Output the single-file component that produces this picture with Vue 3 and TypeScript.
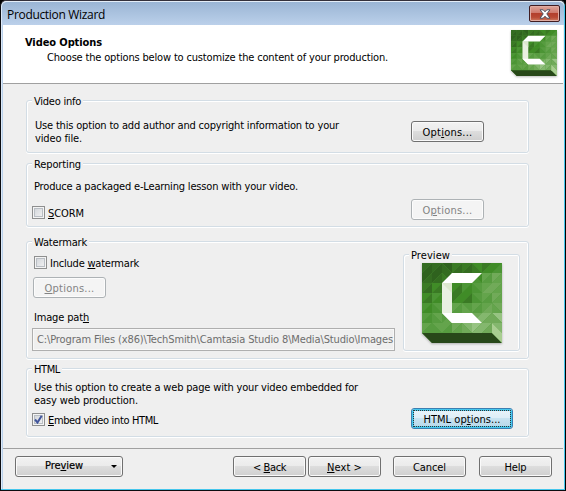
<script setup lang="ts">
import { ref } from 'vue'

const embed = ref(true)
const scorm = ref(false)
const watermark = ref(false)
const imagePath = 'C:\\Program Files (x86)\\TechSmith\\Camtasia Studio 8\\Media\\Studio\\Images'

// Spreads a label over a given width, so dialog metrics stay constant across fonts.
const vFit = {
  mounted(el: HTMLElement, binding: { value: number }) {
    const count = (el.textContent ?? '').length
    const natural = el.getBoundingClientRect().width
    el.style.letterSpacing = `${(binding.value - natural) / count}px`
  },
}

// Facet colours: one pair (upper, lower triangle) for each tile of the logo.
const palette: Record<string, string> = {
  a: '#2f621e', b: '#346c21', c: '#3a7a24', d: '#408c27', e: '#4c9535',
  f: '#579c40', g: '#64a44c', h: '#71aa59', i: '#84b76e', j: '#97c382',
}
const tiles: string[][] = [
  ['ba', 'ba', 'ab', 'cb', 'cb', 'dc', 'cd', 'de'],
  ['ab', 'ab', 'bc', 'cd', 'dc', 'de', 'gf', 'hg'],
  ['cb', 'dc', 'de', 'dc', 'ed', 'fe', 'gh', 'hg'],
  ['dc', 'ed', 'de', 'cd', 'dc', 'fe', 'gf', 'hg'],
  ['ed', 'fe', 'fe', 'gf', 'fg', 'gf', 'gh', 'hg'],
  ['fe', 'gf', 'fg', 'hg', 'gh', 'hi', 'ih', 'jh'],
  ['gf', 'gf', 'gf', 'hg', 'ih', 'ji', 'ih', 'ih'],
]
const facets = tiles.flatMap((row, r) =>
  row.flatMap((pair, c) => {
    const x = c * 10
    const y = r * 10
    const flip = (c + (r > 3 ? 1 : 0)) % 3 === 2
    return flip
      ? [
          { p: `${x},${y} ${x + 10},${y} ${x + 10},${y + 10}`, f: palette[pair[0]] },
          { p: `${x},${y} ${x},${y + 10} ${x + 10},${y + 10}`, f: palette[pair[1]] },
        ]
      : [
          { p: `${x},${y} ${x + 10},${y} ${x},${y + 10}`, f: palette[pair[0]] },
          { p: `${x + 10},${y} ${x + 10},${y + 10} ${x},${y + 10}`, f: palette[pair[1]] },
        ]
  }),
)
</script>

<template>
  <svg class="defs" width="0" height="0">
    <symbol id="logo" viewBox="0 0 80 80" preserveAspectRatio="none">
      <path d="M0 0H80V80H10L0 70Z" fill="#4f9638" />
      <polygon v-for="(t, n) in facets" :key="n" :points="t.p" :fill="t.f" />
      <path d="M0 70H70L80 80H10Z" fill="#284819" />
      <path d="M70 60L80 70V80L70 70Z" fill="#a9ce91" />
      <path d="M20 20H30V60L20 50Z" fill="#e9f0e1" />
      <path d="M20 20H30V30Z" fill="#dce7ce" />
      <path d="M30 10H60L50 20H20ZM20 50H50L60 60H30Z" fill="#fff" />
    </symbol>
  </svg>
  <div class="window">
    <header class="title">
      <span v-fit="98" class="caption">Production Wizard</span>
      <button class="close" aria-label="Close">
        <svg width="12" height="10" viewBox="0 0 12 10">
          <path d="M1 .8H4.2L6 2.8 7.8.8H11L7.8 4.9 11 9.2H7.8L6 7.2 4.2 9.2H1L4.2 4.9Z" fill="#fff" stroke="#4b5262" stroke-width="1" />
        </svg>
      </button>
    </header>

    <section class="head">
      <div class="headtext">
        <div><b v-fit="77">Video Options</b></div>
        <div class="sub"><span v-fit="341">Choose the options below to customize the content of your production.</span></div>
      </div>
      <svg class="headlogo"><use href="#logo" /></svg>
    </section>

    <main>
      <fieldset class="info">
        <legend><span v-fit="47">Video info</span></legend>
        <div class="copy">
          <div><span v-fit="304">Use this option to add author and copyright information to your</span></div>
          <div><span v-fit="47">video file.</span></div>
        </div>
        <button class="btn"><span v-fit="50">Opt<u>i</u>ons...</span></button>
      </fieldset>

      <fieldset class="report">
        <legend><span v-fit="47">Reporting</span></legend>
        <div class="copy"><span v-fit="264">Produce a packaged e-Learning lesson with your video.</span></div>
        <div class="row">
          <label><i class="box" :class="{ on: scorm }" /><span v-fit="36"><u>S</u>CORM</span></label>
          <button class="btn" disabled><span v-fit="50">O<u>p</u>tions...</span></button>
        </div>
      </fieldset>

      <fieldset class="mark">
        <legend><span v-fit="53">Watermark</span></legend>
        <div class="settings">
          <label><i class="box" :class="{ on: watermark }" /><span v-fit="89">Include <u>w</u>atermark</span></label>
          <button class="btn" disabled><span v-fit="50"><u>O</u>ptions...</span></button>
          <div class="pathlabel"><span v-fit="55">Image pat<u>h</u></span></div>
          <div class="field"><span v-fit="356">{{ imagePath }}</span></div>
        </div>
        <fieldset class="thumb">
          <legend><span v-fit="39">Preview</span></legend>
          <svg class="biglogo"><use href="#logo" /></svg>
        </fieldset>
      </fieldset>

      <fieldset class="html">
        <legend><span v-fit="26">HTML</span></legend>
        <div class="copy">
          <div><span v-fit="324">Use this option to create a web page with your video embedded for</span></div>
          <div><span v-fit="104">easy web production.</span></div>
        </div>
        <div class="row">
          <label>
            <i class="box" :class="{ on: embed }"><svg v-if="embed" width="9" height="9" viewBox="0 0 9 9"><path d="M1 4.5L3.5 7.5 7.7.8" fill="none" stroke="#42569c" stroke-width="2" /></svg></i>
            <span v-fit="110"><u>E</u>mbed video into HTML</span>
          </label>
          <button class="btn focus"><span v-fit="77">HTML op<u>t</u>ions...</span></button>
        </div>
      </fieldset>
    </main>

    <footer>
      <button class="btn drop"><span v-fit="38">Pre<u>v</u>iew</span><i class="caret" /></button>
      <div class="nav">
        <button class="btn"><span v-fit="33">&lt; <u>B</u>ack</span></button>
        <button class="btn"><span v-fit="35"><u>N</u>ext &gt;</span></button>
      </div>
      <button class="btn"><span v-fit="33">Cancel</span></button>
      <button class="btn help"><span v-fit="22">Help</span></button>
    </footer>
  </div>
</template>

<style>
body { background: #000; overflow: hidden; }
</style>

<style scoped>
* { box-sizing: border-box; }
.defs { position: absolute; }
span, b { display: inline-block; white-space: pre; }
.window {
  width: 566px; height: 491px; padding: 0 1px 0 1px;
  display: flex; flex-direction: column;
  border: 1px solid #0c0c10; border-top: 1px solid #33303a; border-radius: 6px 6px 0 0;
  border-right-color: #000;
  background: #efefef;
  box-shadow: inset -1px -1px 0 #45c6ec, inset 1px 0 0 #dce9f8, inset 2px 0 0 #b9d0ea;
  font: 11px/13px "DejaVu Sans Condensed", "DejaVu Sans", sans-serif;
  font-stretch: condensed;
  color: #000;
}
.title {
  height: 24px; flex: none; display: flex; justify-content: space-between;
  padding: 4px 2px 0 5px; border-radius: 5px 5px 0 0; border-top: 1px solid #e4edf7;
  background: linear-gradient(#9ab5d4, #bbd0ea);
  font-family: "Open Sans", "Noto Sans", sans-serif; font-size: 12px; line-height: 17px; font-stretch: normal;
}
.close {
  width: 31px; height: 17px; margin: -1px 2px 0 0; padding: 0; display: flex; align-items: center; justify-content: center;
  border: 1px solid #401d22; border-radius: 2px;
  background: linear-gradient(#dda59b 0, #cf7a6c 45%, #b3402c 50%, #b94a34 75%, #cf7c60);
  box-shadow: inset 0 0 0 1px #e0aca2;
}
.head {
  height: 59px; flex: none; display: flex; justify-content: space-between;
  margin: 0 1px 0 1px; padding: 5px 6px 0 22px; background: #fff; border-bottom: 1px solid #a0a0a0;
}
.headtext { padding-top: 6px; }
.headtext > div { height: 15px; }
.sub { padding-left: 22px; }
.headlogo { width: 46px; height: 46px; filter: drop-shadow(0 1px 1px #0004); }
main { height: 364px; flex: none; padding: 10px 0 0 24px; }
fieldset {
  width: 503px; margin: 0; padding: 0 0 0 7px; min-width: 0; border: 1px solid #d3dde5; border-radius: 3px;
  box-shadow: inset 1px 1px 0 #fff, inset -1px 0 0 #fff, 0 1px 0 #fff;
}
legend { height: 13px; margin-left: -2px; padding: 0 2px; background: #efefef; }
legend span, .btn span, label span { position: relative; top: 1px; }
.btn {
  width: 73px; height: 21px; flex: none; padding: 0; margin: 0; display: flex; align-items: center; justify-content: center;
  border: 1px solid #707070; border-radius: 3px; font: inherit; color: #000;
  background: linear-gradient(#f2f2f2 0, #ebebeb 48%, #dddddd 50%, #cfcfcf);
  box-shadow: inset 0 0 0 1px #fafafa;
}
.btn:disabled { color: #838383; border-color: #adb2b5; background: #f4f4f4; box-shadow: inset 0 0 0 1px #fcfcfc; }
.info { height: 59px; display: flex; justify-content: space-between; padding-right: 44px; }
.info .copy { padding: 12px 0 0 1px; }
.info .btn { margin-top: 14px; }
.report { height: 70px; margin-top: 4px; }
.report .copy { padding-top: 10px; }
.row { display: flex; justify-content: space-between; margin-left: -2px; }
.report .row { padding: 6px 44px 0 0; }
.report label { padding-top: 7px; }
label { display: flex; gap: 3px; height: 13px; }
.report label { height: 20px; }
.box {
  width: 13px; height: 13px; flex: none; border: 1px solid #8e8f8f; display: flex; align-items: center; justify-content: center;
  box-shadow: inset 0 0 0 1px #f4f4f4, inset 0 0 0 2px #b9bec4; background: linear-gradient(135deg, #cdd1d6, #f6f6f6);
}
.box svg { flex: none; }
.mark { height: 124px; margin-top: 8px; display: flex; }
.settings { width: 370px; flex: none; padding-top: 8px; }
.settings .btn { margin-top: 8px; margin-left: -1px; }
.pathlabel { margin-top: 13px; }
.field {
  width: 363px; height: 23px; margin: 4px 0 0 -2px; padding: 4px 0 0 4px; overflow: hidden;
  border: 1px solid #afafaf; box-shadow: inset 0 0 0 1px #f8f8f8; color: #6d6d6d;
}
.thumb { width: 117px; height: 103px; flex: none; padding: 0 0 0 7px; margin-left: -1px; }
.thumb { display: flex; }
.biglogo { width: 80px; height: 80px; flex: none; margin: 2px 0 0 11px; filter: drop-shadow(0 1px 1px #0004); }
.html { height: 75px; margin-top: 3px; }
.html .copy { padding-top: 6px; }
.html .row { padding-right: 15px; }
.html label { margin-top: 6px; }
.focus {
  width: 102px; border-color: #3c7fb1; outline: 1px dotted #333; outline-offset: -3px;
  background: linear-gradient(#eaf4fa 0, #deeef8 48%, #c9e3f1 50%, #b5d7e9); box-shadow: inset 0 0 0 2px #46c8ee;
}
.html .focus { margin-top: 1px; }
footer {
  flex: 1; display: flex; margin: 0 1px; padding: 7px 10px 0 12px; border-top: 1px solid #a0a0a0;
}
.drop { width: 108px; margin-right: 110px; justify-content: flex-start; padding: 0 5px 4px 29px; -webkit-text-stroke: .2px #000; }
.caret { margin: 3px 0 0 auto; border: 3px solid transparent; border-top-color: #000; border-bottom: 0; }
.nav { display: flex; gap: 2px; margin-right: 12px; }
.help { margin-left: 13px; }
</style>
